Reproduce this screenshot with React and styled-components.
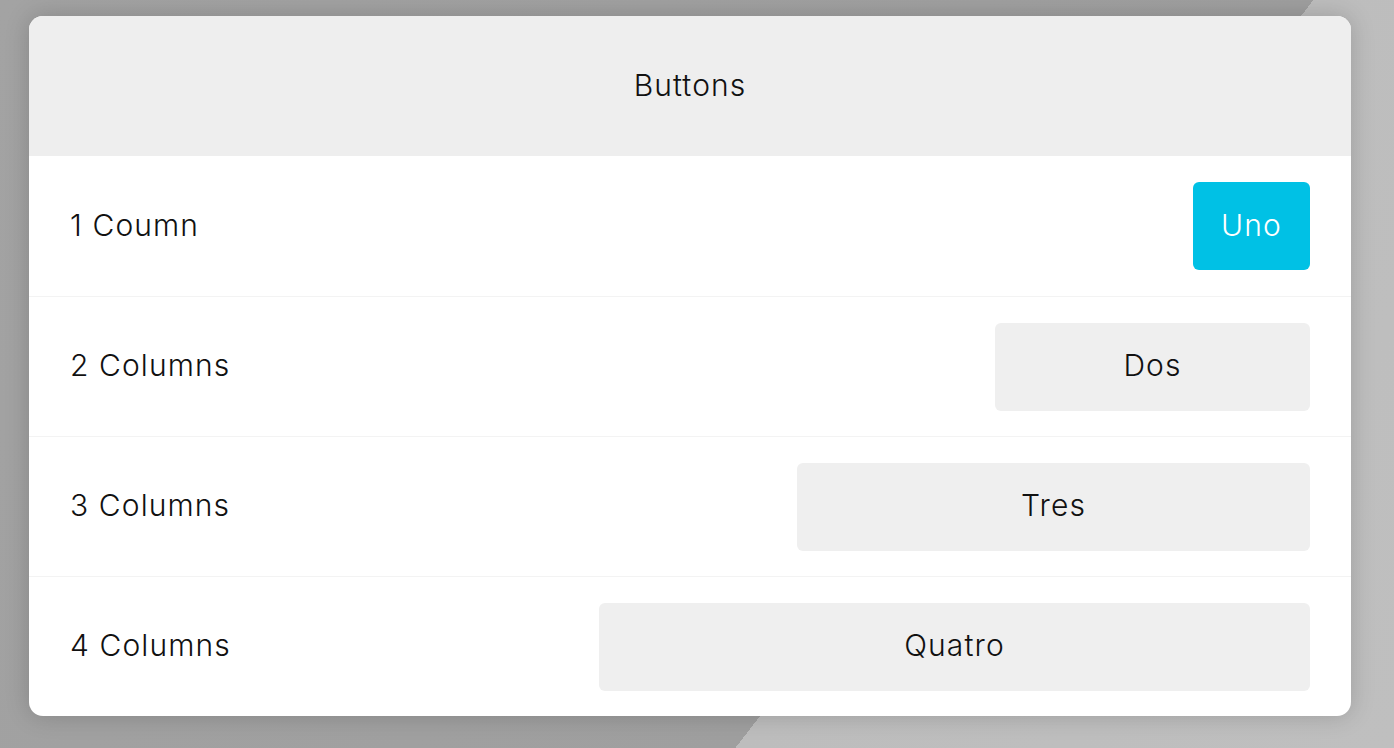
import React from 'react';
import styled, { createGlobalStyle } from 'styled-components';

const GlobalStyle = createGlobalStyle`
  html, body {
    margin: 0;
    padding: 0;
  }
  body {
    font-family: Inter, "Open Sans", "Liberation Sans", sans-serif;
    font-weight: 300;
    letter-spacing: 1.1px;
  }
`;

const Backdrop = styled.div`
  width: 100vw;
  height: 100vh;
  box-sizing: border-box;
  padding: 16px 43px 32px 29px;
  background: linear-gradient(127.7deg, #a3a3a3 0%, #9f9f9f 66.6%, #bdbdbd 66.6%, #bfbfbf 100%);
  overflow: hidden;
`;

const Panel = styled.div`
  background: #fff;
  border-radius: 14px;
  overflow: hidden;
  box-shadow: 0 0 24px rgba(0, 0, 0, 0.18);
  display: flex;
  flex-direction: column;
`;

const Header = styled.div`
  height: 140px;
  padding-bottom: 2px;
  box-sizing: border-box;
  background: #eeeeee;
  display: flex;
  align-items: center;
  justify-content: center;
  font-size: 30px;
  color: #111;
`;

const Row = styled.div`
  height: 140px;
  box-sizing: border-box;
  display: flex;
  align-items: center;
  justify-content: space-between;
  padding: 0 41px 0 41px;
  border-top: ${props => (props.first ? 'none' : '1px solid #f3f3f3')};
`;

const Label = styled.span`
  font-size: 30px;
  color: #111;
  margin-top: -3px;
`;

const Button = styled.button`
  width: ${props => 117 + 198 * (props.span - 1)}px;
  height: 88px;
  padding: 0 0 3px;
  border: none;
  border-radius: 6px;
  font-family: inherit;
  font-weight: inherit;
  letter-spacing: inherit;
  font-size: 30px;
  background: ${props => (props.primary ? '#00c1e5' : '#efefef')};
  color: ${props => (props.primary ? '#ffffff' : '#111')};
  cursor: pointer;
`;

const rows = [
  { label: '1 Coumn', text: 'Uno', span: 1, primary: true },
  { label: '2 Columns', text: 'Dos', span: 2 },
  { label: '3 Columns', text: 'Tres', span: 3 },
  { label: '4 Columns', text: 'Quatro', span: 4 },
];

export default function App() {
  return (
    <>
      <GlobalStyle />
      <Backdrop>
        <Panel>
          <Header>Buttons</Header>
          {rows.map((r, i) => (
            <Row key={r.text} first={i === 0}>
              <Label>{r.label}</Label>
              <Button span={r.span} primary={r.primary}>{r.text}</Button>
            </Row>
          ))}
        </Panel>
      </Backdrop>
    </>
  );
}
